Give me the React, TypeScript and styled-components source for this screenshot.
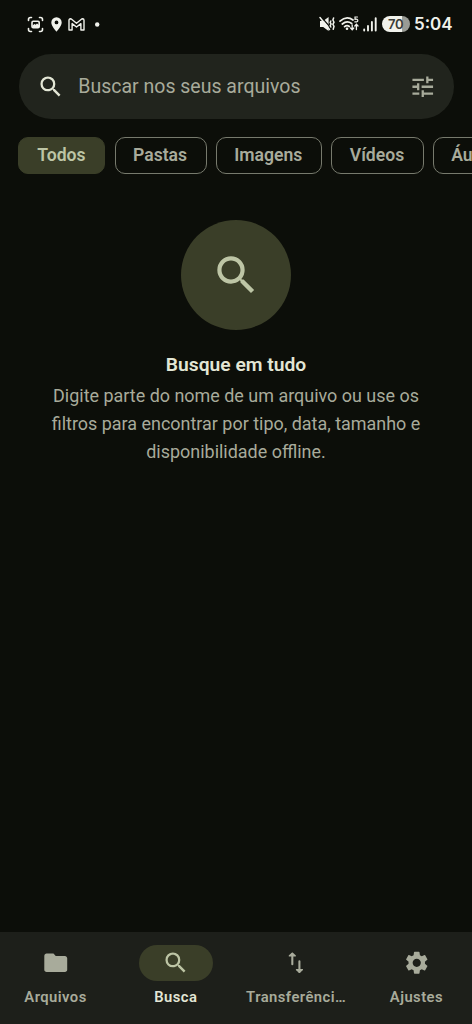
import React from "react";
import styled, { createGlobalStyle } from "styled-components";
import { MdFolder, MdSearch, MdSettings, MdTune } from "react-icons/md";

const GlobalStyle = createGlobalStyle`
  * { box-sizing: border-box; }
  body { margin: 0; background: #0c0e09; font-family: Roboto, sans-serif; }
`;

const Screen = styled.div`
  width: 472px;
  height: 1024px;
  display: flex;
  flex-direction: column;
  overflow: hidden;
  background: #0c0e09;
  color: #a8ab9b;
`;

const StatusBar = styled.header`
  height: 54px;
  flex: none;
  display: flex;
  justify-content: space-between;
  padding: 14px 21px 20px 27px;
  color: #f1f2ec;
`;

const StatusGroup = styled.div<{ $gap: number }>`
  display: flex;
  align-items: center;
  gap: ${(p) => p.$gap}px;
  svg { display: block; flex: none; }
`;

const Battery = styled.div`
  width: 27.5px;
  height: 16.5px;
  margin-left: 1px;
  border-radius: 9px;
  background: linear-gradient(90deg, #f1f2ec 70%, #999b95 70%);
  color: #3b3d38;
  font: 600 13px/16.5px Inter, sans-serif;
  letter-spacing: -0.3px;
  text-align: center;
`;

const Clock = styled.span`
  font: 600 17px/20px Inter, sans-serif;
  width: 37px;
  margin-left: 0.5px;
  white-space: nowrap;
`;

const SearchBar = styled.div`
  height: 64.5px;
  flex: none;
  margin: 0 18px 0 18.5px;
  padding: 0 18px 0 18.3px;
  border-radius: 33px;
  background: #21241d;
  display: flex;
  align-items: center;
`;

const Placeholder = styled.span`
  flex: 1;
  margin-left: 14px;
  padding-top: 2px;
  font-size: 19.5px;
  line-height: 28px;
`;

const Icon = styled.span<{ $size: number; $color: string }>`
  display: flex;
  font-size: ${(p) => p.$size}px;
  color: ${(p) => p.$color};
`;

const Chips = styled.div`
  display: flex;
  flex: none;
  gap: 9.2px;
  margin-top: 18.5px;
  padding-left: 18.4px;
  overflow: hidden;
`;

const Chip = styled.span<{ $width: number; $active?: boolean }>`
  flex: none;
  width: ${(p) => p.$width}px;
  height: 36.7px;
  border-radius: 10px;
  border: 1px solid ${(p) => (p.$active ? "#3a3e28" : "#777a6d")};
  background: ${(p) => (p.$active ? "#3a3e28" : "transparent")};
  color: ${(p) => (p.$active ? "#bdc5a5" : "#a8ab9b")};
  font-size: 17.6px;
  font-weight: 600;
  line-height: 35.5px;
  padding-right: 1px;
  text-align: center;
`;

const Empty = styled.main`
  flex: 1;
  display: flex;
  flex-direction: column;
  align-items: center;
  padding-top: 46.3px;
  text-align: center;
`;

const Disc = styled.div`
  width: 110px;
  height: 110px;
  border-radius: 50%;
  background: #3a3e28;
  display: flex;
  align-items: center;
  justify-content: center;
`;

const Title = styled.h1`
  margin: 21px 0 0;
  font-size: 19.25px;
  font-weight: 600;
  line-height: 28px;
  color: #e3e6d5;
`;

const Description = styled.p`
  margin: 3px 0 0;
  font-size: 17.95px;
  line-height: 28px;
  white-space: nowrap;
`;

const NavBar = styled.nav`
  flex: none;
  height: 92px;
  display: grid;
  grid-template-columns: repeat(4, 1fr);
  column-gap: 9.2px;
  padding-top: 12.8px;
  background: #1d1f1a;
`;

const NavItem = styled.div<{ $active?: boolean }>`
  display: flex;
  flex-direction: column;
  align-items: center;
  color: ${(p) => (p.$active ? "#e3e6d5" : "#a8ab9b")};
  font-size: 14.8px;
  font-weight: 600;
  line-height: 18px;
  letter-spacing: 0.45px;
  white-space: nowrap;
`;

const Pill = styled.span<{ $active?: boolean }>`
  width: 73.5px;
  height: 36.7px;
  margin-bottom: 6.5px;
  border-radius: 19px;
  background: ${(p) => (p.$active ? "#3a3e28" : "transparent")};
  color: ${(p) => (p.$active ? "#bdc5a5" : "#a8ab9b")};
  display: flex;
  align-items: center;
  justify-content: center;
  font-size: 27.5px;
`;

const ScreenshotIcon = () => (
  <svg width="17" height="17" viewBox="0 0 17 17" fill="none" stroke="currentColor" strokeWidth="1.6" strokeLinecap="round">
    <path d="M1.5 4.5V3.5Q1.5 1.5 3.5 1.5H4.5M12.5 1.5H13.5Q15.5 1.5 15.5 3.5V4.5M15.5 12.5V13.5Q15.5 15.5 13.5 15.5H12.5M4.5 15.5H3.5Q1.5 15.5 1.5 13.5V12.5" />
    <rect x="5" y="5.2" width="7.2" height="6.600" rx="1.2" />
    <path d="M5.4 9.500L7.5 8L8.7 8.800L10 7.500L12 9V11.5H5.4Z" fill="currentColor" stroke="none" />
  </svg>
);

const PinIcon = () => (
  <svg width="11" height="15" viewBox="0 0 11 15">
    <path fill="currentColor" fillRule="evenodd" d="M5.5.2A5.2 5.2 0 0 0 .3 5.4C.3 9 5.5 14.6 5.5 14.6S10.7 9 10.7 5.4A5.2 5.2 0 0 0 5.5.2ZM5.5 3.5A1.9 1.9 0 1 1 5.5 7.3A1.9 1.9 0 0 1 5.5 3.5Z" />
  </svg>
);

const MailIcon = () => (
  <svg width="17" height="13" viewBox="0 0 17 13" fill="none" stroke="currentColor" strokeWidth="1.4" strokeLinejoin="round">
    <path d="M1 2.2Q1 .8 2.4.8L3.3 1L8.5 5.2L13.7 1L14.6.8Q16 .8 16 2.2V12H12.900V5.6L8.5 9L4.100 5.6V12H1Z" />
  </svg>
);

const MutedIcon = () => (
  <svg width="16" height="16" viewBox="0 0 16 16" fill="none" stroke="currentColor" strokeLinecap="round">
    <path d="M1 5H4.2L9.6 1V15L4.2 11H1Z" fill="currentColor" stroke="none" />
    <path d="M2.200 .8L12 12.200" stroke="#0c0e09" strokeWidth="1.3" />
    <path d="M1 1.5L10.5 13.5" strokeWidth="1.5" />
    <path d="M11.800 5L11.2 6.500L12.1 8L11.2 9.700L11.800 11M14.6 2L13.9 4L15 6.2L13.9 8.3L15 10.4L14.200 13.200" strokeWidth="1.5" />
  </svg>
);

const WifiIcon = () => (
  <svg width="20" height="16" viewBox="0 0 20 16" fill="none" stroke="currentColor" strokeWidth="1.7" strokeLinecap="round">
    <path d="M1 5.2Q7.5-.8 14 4M3.3 8Q8 4 12.7 7.5M5.6 10.7Q8 8.7 10.3 10.5" />
    <circle cx="8" cy="12.8" r="1.3" fill="currentColor" stroke="none" />
    <path d="M18.5 1H16V3.3Q18.8 2.8 18.8 4.6Q18.7 6.4 15.8 5.8" strokeWidth="1.2" />
    <path d="M13.2 9V13.5M11.6 12L13.2 13.7L14.8 12M17.4 13.5V8.5M15.8 10L17.4 8.3L19 10" strokeWidth="1.3" />
  </svg>
);

const SignalIcon = () => (
  <svg width="14" height="15" viewBox="0 0 14 15" stroke="currentColor" strokeWidth="1.9" strokeLinecap="round">
    <path d="M1.2 12.5V13.5M5 9V13.5M8.9 5V13.5M12.7 1.2V13.5" />
  </svg>
);

const TransferIcon = () => (
  <svg width="27.5" height="27.5" viewBox="0 0 24 24" fill="none" stroke="currentColor" strokeWidth="1.8" strokeLinecap="round" strokeLinejoin="round">
    <path d="M9 13.3V4.2M15.2 10.7V20" />
    <path d="M6.500 6L9 3.7L11.500 6ZM12.700 18L15.2 20.3L17.700 18Z" fill="currentColor" strokeWidth="1.3" />
  </svg>
);

const chips = [
  { label: "Todos", width: 87, active: true },
  { label: "Pastas", width: 92 },
  { label: "Imagens", width: 106 },
  { label: "Vídeos", width: 93 },
  { label: "Áudios", width: 92 },
];

const tabs = [
  { label: "Arquivos", icon: <MdFolder /> },
  { label: "Busca", icon: <MdSearch />, active: true },
  { label: "Transferênci…", icon: <TransferIcon /> },
  { label: "Ajustes", icon: <MdSettings /> },
];

export default function App() {
  return (
    <Screen>
      <GlobalStyle />
      <StatusBar>
        <StatusGroup $gap={6.6}>
          <ScreenshotIcon />
          <PinIcon />
          <MailIcon />
          <svg width="10" height="5" viewBox="0 0 10 5"><circle cx="5.2" cy="2.5" r="2.2" fill="currentColor" /></svg>
        </StatusGroup>
        <StatusGroup $gap={4}>
          <MutedIcon />
          <WifiIcon />
          <SignalIcon />
          <Battery>70</Battery>
          <Clock>5:04</Clock>
        </StatusGroup>
      </StatusBar>
      <SearchBar>
        <Icon $size={27.5} $color="#e3e6d5"><MdSearch /></Icon>
        <Placeholder>Buscar nos seus arquivos</Placeholder>
        <Icon $size={27.5} $color="#a8ab9b"><MdTune /></Icon>
      </SearchBar>
      <Chips>
        {chips.map((c) => (
          <Chip key={c.label} $width={c.width} $active={c.active}>{c.label}</Chip>
        ))}
      </Chips>
      <Empty>
        <Disc>
          <Icon $size={50.5} $color="#bdc5a5"><MdSearch /></Icon>
        </Disc>
        <Title>Busque em tudo</Title>
        <Description>
          Digite parte do nome de um arquivo ou use os<br />
          filtros para encontrar por tipo, data, tamanho e<br />
          disponibilidade offline.
        </Description>
      </Empty>
      <NavBar>
        {tabs.map((t) => (
          <NavItem key={t.label} $active={t.active}>
            <Pill $active={t.active}>{t.icon}</Pill>
            {t.label}
          </NavItem>
        ))}
      </NavBar>
    </Screen>
  );
}
